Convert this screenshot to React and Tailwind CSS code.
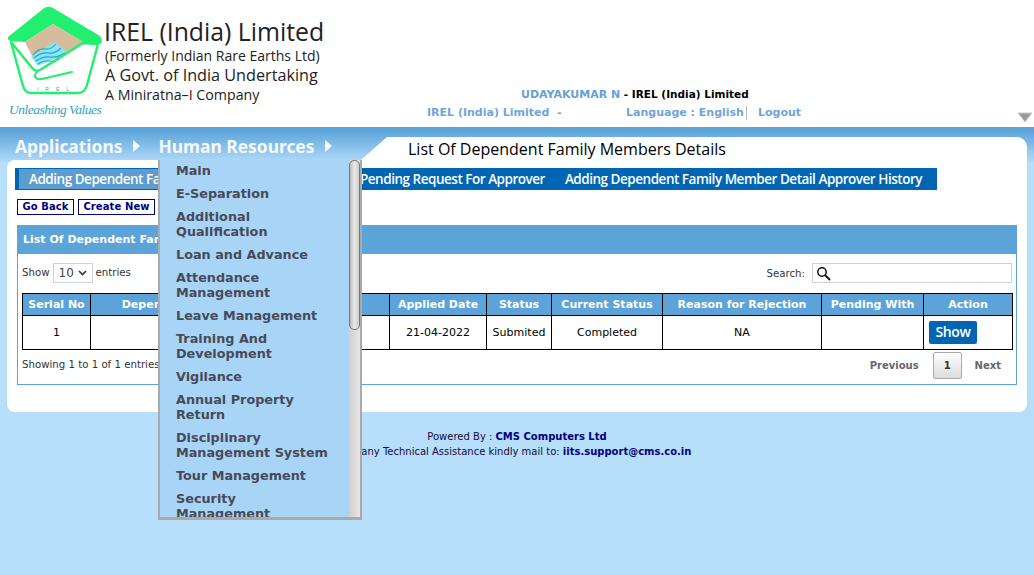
import React from "react";

const menu = ["Main","E-Separation","Additional Qualification","Loan and Advance","Attendance Management","Leave Management","Training And Development","Vigilance","Annual Property Return","Disciplinary Management System","Tour Management","Security Management"];

function Logo() {
  return (
    <svg width="104" height="98" viewBox="0 0 104 98" className="shrink-0">
      <path d="M8 37 L43 9 Q48 5 53 8 L100 36 Q103 39 101 44 L83 42 L53 24 L25 42 L11 41 Q7 40 8 37 Z" fill="#20ef6f" />
      <path d="M25 42 L53 24 L83 42 L68 54 L62 58 L34 60 Z" fill="#d4bc9c" />
      <path d="M31 57 L55 42 L68 53 L38 66 Z" fill="#86e6f2" />
      <g stroke="#2a9fd0" strokeWidth="1.1" fill="none">
        <path d="M33 55 Q39 48 45 49 T56 44" />
        <path d="M34 58 Q41 52 48 53 T61 48" />
        <path d="M36 61 Q43 56 50 57 T65 53" />
        <path d="M38 64 Q44 60 50 61 T60 58" />
      </g>
      <path d="M11 42 L33 69 Q36 72 40 70 L83 43 L98 44 L87 85 Q85 93 78 93 L31 93 Q25 93 23 86 Z" fill="none" stroke="#20ef6f" strokeWidth="2.4" strokeLinejoin="round" />
      <path d="M38 71 Q33 75 36 78 Q38 80 42 79 L72 72" fill="none" stroke="#20ef6f" strokeWidth="2" strokeLinecap="round" />
      <text x="37" y="91" fontSize="5" fill="#3a9fb8" fontFamily="Liberation Sans, sans-serif" textLength="32">I R E L</text>
    </svg>
  );
}

function Caret() {
  return <span className="inline-block w-0 h-0 border-y-[6px] border-y-transparent border-l-[7px] border-l-[#f4f9fd]" />;
}

const ths = ["Serial No","Dependent Name","Relation","Applied Date","Status","Current Status","Reason for Rejection","Pending With","Action"];
const widths = [68,170,129,97,65,111,159,102,89];

export default function App() {
  return (
    <div className="relative min-h-[575px] bg-[#b7dffb] font-['DejaVu_Sans',sans-serif] text-[11px] text-black overflow-hidden">
      <header className="relative flex h-[130px] bg-white border-b-[3px] border-[#5ba3d9]">
        <div className="w-[104px] shrink-0">
          <Logo />
          <div className="mt-[3px] pl-[9px] font-['Liberation_Serif',serif] italic text-[13.5px] leading-[18px] text-[#2ba5b9] tracking-[-0.5px] whitespace-nowrap">Unleashing Values</div>
        </div>
        <div className="w-[316px] pt-[16px] font-['Open_Sans',sans-serif] text-[#222] whitespace-nowrap">
          <div className="text-[24.8px] leading-[30px]">IREL (India) Limited</div>
          <div className="text-[14px] leading-[20px] pl-px">(Formerly Indian Rare Earths Ltd)</div>
          <div className="text-[16.2px] leading-[19px] pl-px">A Govt. of India Undertaking</div>
          <div className="text-[14.2px] leading-[19px] pl-px">A Miniratna–I Company</div>
        </div>
        <div className="pt-[87px] pl-[7px] whitespace-nowrap">
          <div className="pl-[94px] leading-[14px]"><span className="font-bold text-[#659fd7]">UDAYAKUMAR N</span><span className="font-semibold text-[10.5px]"> - IREL (India) Limited</span></div>
          <div className="flex mt-[4px] font-bold text-[#70a5dc] leading-[14px]">
            <span className="w-[199px]">IREL (India) Limited&nbsp; -</span>
            <span className="pr-[2px] border-r border-[#bbb]">Language : English</span>
            <span className="pl-[11px]">Logout</span>
          </div>
        </div>
        <svg width="16" height="11" viewBox="0 0 16 11" className="absolute right-[1px] top-[112px]">
          <path d="M1 1 H15 L8 10 Z" fill="#999" stroke="#ccc" />
        </svg>
      </header>

      <nav className="flex h-[32px] bg-gradient-to-b from-[#5ba3d9] to-[#b0dafa]">
        <div className="w-[361px] shrink-0 flex items-center pl-[15px] font-['Noto_Sans',sans-serif] font-bold text-[17.4px] text-[#f4f9fd] whitespace-nowrap">
          <span className="mr-[11px]">Applications</span><Caret />
          <span className="ml-[18px] mr-[11px]">Human Resources</span><Caret />
        </div>
      </nav>

      <main className="relative mx-[7px] mt-[-32px] h-[283px] pt-[7px]">
        <div className="flex h-[23px]">
          <div className="w-[354px] shrink-0" />
          <div className="flex-1 bg-white rounded-tr-[10px] [clip-path:polygon(26px_0,100%_0,100%_100%,0_100%)] pl-[47px] font-['Open_Sans',sans-serif] font-medium text-[16px] leading-[24px] whitespace-nowrap">List Of Dependent Family Members Details</div>
        </div>
        <div className="bg-white h-[252px] rounded-b-[8px] rounded-tl-[8px] px-[8px] pt-[8px]">
          <div className="flex h-[22px] w-[922px] bg-[#0066b3] font-['Open_Sans',sans-serif] font-semibold text-[13.5px] tracking-[-0.48px] leading-[22px] text-white whitespace-nowrap">
            <span className="ml-[4px] my-px w-[252px] pl-[10px] bg-[#5c9ccf] leading-[20px] overflow-hidden">Adding Dependent Family Member Detail</span>
            <span className="ml-[89px]">Pending Request For Approver</span>
            <span className="ml-[20px]">Adding Dependent Family Member Detail Approver History</span>
          </div>
          <div className="flex gap-[4px] mt-[9px] ml-[2px] font-bold text-[10px] tracking-[0.1px] text-[#000080]">
            <button className="h-[16px] w-[57px] bg-white border border-[#000080] leading-[14px]">Go Back</button>
            <button className="h-[16px] w-[77px] bg-white border border-[#000080] leading-[14px]">Create New</button>
          </div>
          <section className="mt-[10px] ml-[2px] w-[1000px] h-[160px] border border-[#5ba3d9] border-t-0">
            <div className="-mx-px h-[29px] bg-[#5ba3d9] pl-[6px] font-bold text-[11px] leading-[29px] text-white">List Of Dependent Family Members Details</div>
            <div className="flex items-center justify-between h-[20px] mt-[9px] pl-[4px] pr-[4px] text-[#333] text-[10.2px]">
              <div className="flex items-center gap-[3px]">
                <span>Show</span>
                <span className="flex items-center justify-between w-[40px] h-[20px] border border-[#ccd3dc] px-[5px] text-[12px] text-[#444]">10
                  <svg width="9" height="6" viewBox="0 0 9 6"><path d="M1 1 L4.5 4.5 L8 1" fill="none" stroke="#333" strokeWidth="1.6" /></svg>
                </span>
                <span>entries</span>
              </div>
              <div className="flex items-center gap-[7px]">
                <span className="pt-[2px]">Search:</span>
                <span className="flex items-center w-[200px] h-[20px] border border-[#ccd3dc] pl-[3px]">
                  <svg width="15" height="15" viewBox="0 0 15 15"><circle cx="6" cy="6" r="4.2" fill="none" stroke="#111" strokeWidth="1.5" /><path d="M9 9 L14 14" stroke="#111" strokeWidth="2" /></svg>
                </span>
              </div>
            </div>
            <table className="table-fixed border-collapse ml-[4px] mt-[10px] w-[990px] text-center">
              <colgroup>{widths.map((w, i) => <col key={i} style={{ width: w }} />)}</colgroup>
              <thead>
                <tr className="h-[22px] bg-[#5ba3d9] text-white font-bold">
                  {ths.map(t => <th key={t} className="border border-black p-0 pt-[2px] font-bold whitespace-nowrap">{t}</th>)}
                </tr>
              </thead>
              <tbody>
                <tr className="h-[34px]">
                  {["1","","","21-04-2022","Submited","Completed","NA",""].map((c, i) => <td key={i} className="border border-black p-0 pt-[2px]">{c}</td>)}
                  <td className="border border-black p-0 text-left pl-[5px]">
                    <span className="inline-block w-[48px] h-[23px] rounded-[2px] bg-[#0066b3] text-white text-center font-['Open_Sans',sans-serif] font-semibold text-[14px] tracking-[-0.4px] leading-[22px]">Show</span>
                  </td>
                </tr>
              </tbody>
            </table>
            <div className="flex items-start justify-between pl-[4px] pr-[15px] mt-[2px]">
              <span className="mt-[5px] text-[10.2px] text-[#333]">Showing 1 to 1 of 1 entries</span>
              <div className="flex items-center font-bold text-[10px] text-[#666]">
                <span>Previous</span>
                <span className="ml-[14px] mr-[13px] w-[29px] h-[27px] flex items-center justify-center rounded-[2px] border border-[#aaa] bg-gradient-to-b from-white to-[#dcdcdc] text-[#333]">1</span>
                <span>Next</span>
              </div>
            </div>
          </section>
        </div>
      </main>

      <footer className="mt-[16px] text-center text-[10px] leading-[15px] text-[#150a3c]">
        <div>Powered By : <b className="text-[#000080]">CMS Computers Ltd</b></div>
        <div>For any Technical Assistance kindly mail to: <b className="text-[#000080]">iits.support@cms.co.in</b></div>
      </footer>

      <div className="absolute left-[158px] top-[160px] w-[204px] h-[360px] overflow-hidden bg-[#a8d4f5] border-l-2 border-b-[3px] border-r-2 border-[#aaa]">
        <ul className="pl-[16px] pt-[3px] w-[172px] font-bold text-[12.8px] leading-[15px] text-[#474a59]">
          {menu.map(m => <li key={m} className="mb-[8px]">{m}</li>)}
        </ul>
        <div className="absolute right-0 top-0 bottom-0 w-[11px] bg-gradient-to-r from-[#d0d0d0] to-[#e6e6e6]">
          <div className="h-[170px] w-full rounded-[5px] bg-gradient-to-r from-[#bdbdbd] via-[#e8e8e8] to-[#cfcfcf] border border-[#777]" />
        </div>
      </div>
    </div>
  );
}
